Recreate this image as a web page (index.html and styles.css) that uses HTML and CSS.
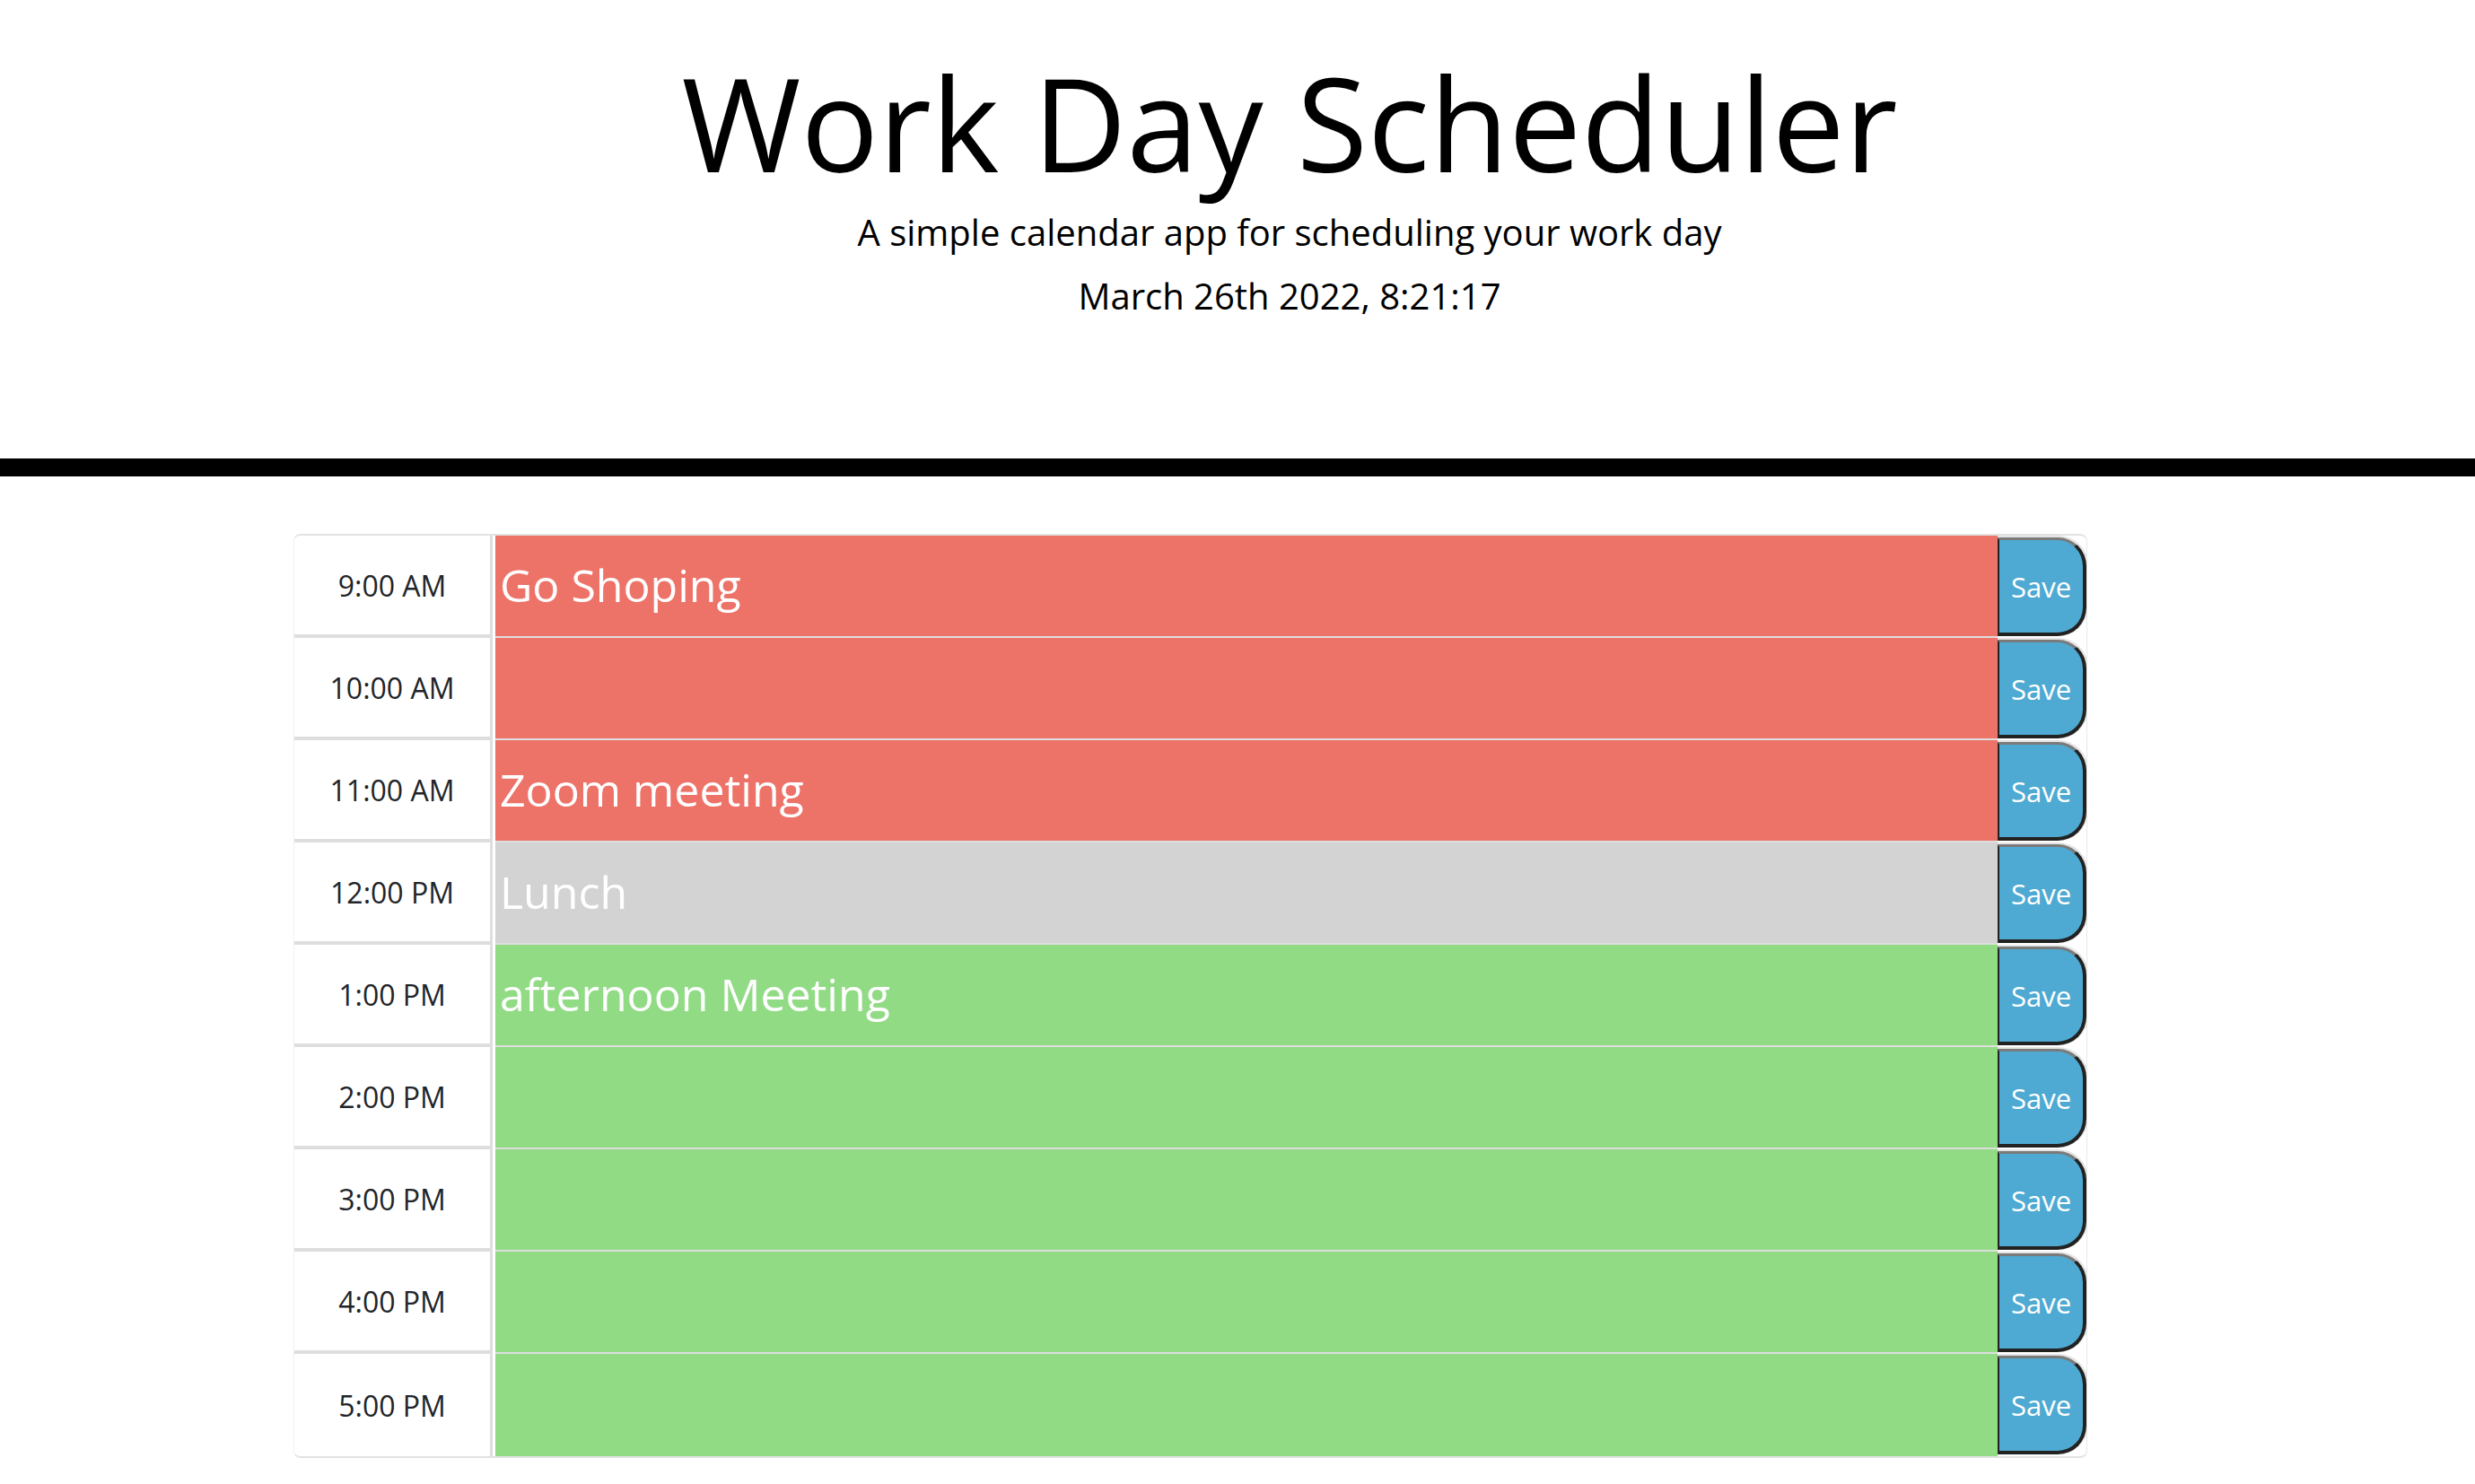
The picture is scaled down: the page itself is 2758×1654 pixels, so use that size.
FILE: index.html
```html
<!DOCTYPE html>
<html lang="en">
<head>
<meta charset="utf-8">
<title>Work Day Scheduler</title>
<link rel="stylesheet" href="styles.css">
</head>
<body>
<header class="jumbotron">
  <h1 class="title">Work Day Scheduler</h1>
  <p class="lead">A simple calendar app for scheduling your work day</p>
  <p class="current-day">March 26th 2022, 8:21:17</p>
</header>
<main class="schedule">
  <div class="time-block">
    <div class="hour">9:00 AM</div>
    <textarea class="description present">Go Shoping</textarea>
    <button class="saveBtn">Save</button>
  </div>
  <div class="time-block">
    <div class="hour">10:00 AM</div>
    <textarea class="description present"></textarea>
    <button class="saveBtn">Save</button>
  </div>
  <div class="time-block">
    <div class="hour">11:00 AM</div>
    <textarea class="description present">Zoom meeting</textarea>
    <button class="saveBtn">Save</button>
  </div>
  <div class="time-block">
    <div class="hour">12:00 PM</div>
    <textarea class="description past">Lunch</textarea>
    <button class="saveBtn">Save</button>
  </div>
  <div class="time-block">
    <div class="hour">1:00 PM</div>
    <textarea class="description future">afternoon Meeting</textarea>
    <button class="saveBtn">Save</button>
  </div>
  <div class="time-block">
    <div class="hour">2:00 PM</div>
    <textarea class="description future"></textarea>
    <button class="saveBtn">Save</button>
  </div>
  <div class="time-block">
    <div class="hour">3:00 PM</div>
    <textarea class="description future"></textarea>
    <button class="saveBtn">Save</button>
  </div>
  <div class="time-block">
    <div class="hour">4:00 PM</div>
    <textarea class="description future"></textarea>
    <button class="saveBtn">Save</button>
  </div>
  <div class="time-block last">
    <div class="hour">5:00 PM</div>
    <textarea class="description future"></textarea>
    <button class="saveBtn">Save</button>
  </div>
</main>
</body>
</html>
```
FILE: styles.css
```css
html, body {
  margin: 0;
  padding: 0;
  background: #ffffff;
}

body {
  font-family: "Open Sans", "Noto Sans", sans-serif;
  color: #000000;
}

.jumbotron {
  text-align: center;
  padding: 64px 0 161px 116px;
  border-bottom: 20px solid #000000;
}

.title {
  margin: 0;
  font-size: 144px;
  font-weight: 400;
  line-height: 144px;
}

.lead {
  margin: 31px 0 0;
  font-size: 40px;
  line-height: 40px;
}

.current-day {
  margin: 31px 0 0;
  font-size: 40px;
  line-height: 40px;
}

.schedule {
  margin: 64px 0 0 327px;
  width: 1997px;
  border-top: 2px solid #e2e2e2;
  border-bottom: 2px solid #e2e2e2;
  border-left: 1px solid #f1f1f1;
  border-right: 1px solid #e8e8e8;
  border-radius: 8px;
  overflow: hidden;
}

.time-block {
  display: flex;
  height: 114px;
}

.hour {
  box-sizing: border-box;
  width: 221px;
  height: 114px;
  display: flex;
  align-items: center;
  justify-content: center;
  background: #ffffff;
  color: #212529;
  font-size: 32px;
  border-right: 3px solid #dedede;
  border-bottom: 4px solid #dedede;
}

.description {
  box-sizing: border-box;
  flex: 1;
  height: 114px;
  margin: 0 0 0 3px;
  padding: 21px 5px 0;
  border: none;
  border-bottom: 2px solid #dedede;
  resize: none;
  outline: none;
  font-family: "Open Sans", "Noto Sans", sans-serif;
  font-size: 50px;
  line-height: normal;
  color: #ffffff;
  overflow: hidden;
}

.present {
  background: #ed7369;
}

.past {
  background: #d3d3d3;
}

.future {
  background: #91db85;
}

.last .hour,
.last .description {
  border-bottom: none;
}

.saveBtn {
  box-sizing: border-box;
  width: 99px;
  height: 110px;
  margin: 2px 0;
  padding: 0;
  background: #4eaad2;
  color: #ffffff;
  font-family: "Open Sans", "Noto Sans", sans-serif;
  font-size: 31px;
  border-top: 3px solid #7a7a7a;
  border-right: 4px solid #222222;
  border-bottom: 4px solid #222222;
  border-left: 2px solid #222222;
  border-radius: 0 32px 32px 0;
  box-shadow: 1px -1px 0 1px #e4e4e4;
}
```
